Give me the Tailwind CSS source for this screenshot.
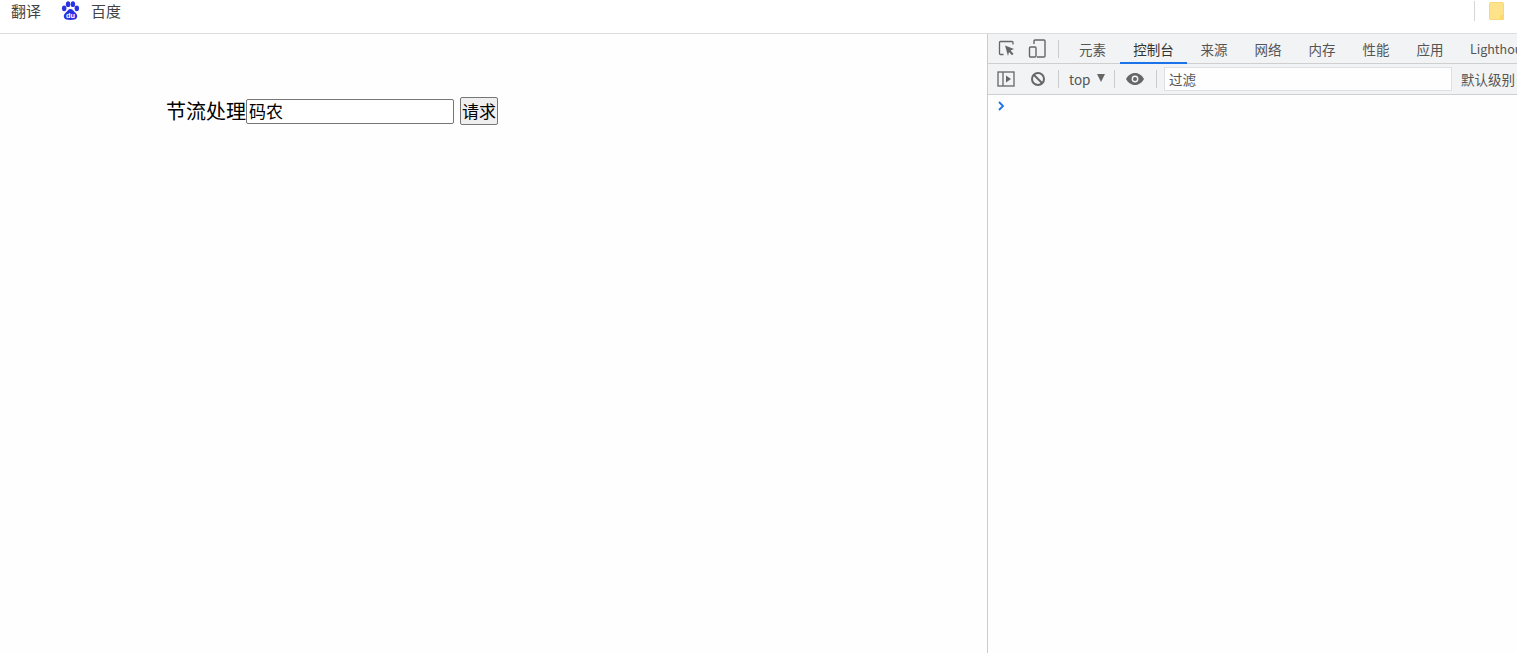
<!DOCTYPE html>
<html lang="zh">
<head>
<meta charset="utf-8">
<script src="https://cdn.jsdelivr.net/npm/@tailwindcss/browser@4"></script>
</head>
<body class="w-[1517px] h-[653px] overflow-hidden bg-white font-['Noto_Sans_CJK_SC','Liberation_Sans',sans-serif]">
<header class="h-[34px] border-b border-[#dddddd] flex items-start text-[15px] text-[#444] bg-white">
  <span class="ml-[11px] leading-[22px]">翻译</span>
  <svg class="ml-[20px] mt-[1px] w-[19px] h-[20px]" viewBox="0 0 18 19" fill="#2932e1">
    <ellipse cx="3" cy="7" rx="2.1" ry="2.7"/><ellipse cx="6.7" cy="3" rx="2.1" ry="2.8"/><ellipse cx="11.3" cy="3" rx="2.1" ry="2.8"/><ellipse cx="15" cy="7" rx="2.1" ry="2.7"/>
    <path d="M9 7.500c-2 0-3 2-4.500 3.500C3 12.500 2 14 3 16c.8 1.800 3 2 6 2s5.200-.2 6-2c1-2 0-3.500-1.500-5C12 9.500 11 7.500 9 7.500z"/>
    <text x="9" y="16.500" text-anchor="middle" font-size="7" font-weight="700" fill="#fff" font-family="Liberation Sans">du</text>
  </svg>
  <span class="ml-[11px] leading-[22px]">百度</span>
  <div class="ml-auto flex items-start">
    <div class="w-px h-[20px] mt-[1px] bg-[#d5d5d5]"></div>
    <div class="relative ml-[14px] mr-[13px] mt-[2px] w-[15px] h-[18px] rounded-[2px] bg-[#fee38a] border border-[#f8d775]">
      <div class="absolute right-[-1px] bottom-[-1px] w-[4px] h-[5px] bg-[#fbd96e] rounded-[1px]"></div>
    </div>
  </div>
</header>
<div class="flex h-[619px]">
  <main class="w-[987px] shrink-0 bg-[#fefefe] pl-[166px] pt-[63px]">
    <div class="flex items-start text-black h-[28px]">
      <span class="text-[20px] leading-[27px] w-[80px] whitespace-nowrap">节流处理</span>
      <input value="码农" class="w-[208px] h-[25px] mt-[2px] border border-[#767676] rounded-[2px] pl-[2px] pr-[2px] pb-[2px] text-[17px] leading-[20px] text-black bg-white outline-none">
      <button class="ml-[6px] w-[38px] h-[28px] border border-[#767676] rounded-[2px] bg-[#efefef] text-[17px] leading-[24px] text-black whitespace-nowrap">请求</button>
    </div>
  </main>
  <aside class="w-[530px] shrink-0 border-l border-[#cccccc] bg-[#fefefe] text-[13.500px] text-[#555] overflow-hidden">
    <div class="h-[30px] bg-[#f1f3f4] border-b border-[#cfcfcf] flex items-center">
      <svg class="shrink-0 ml-[10px] w-[18px] h-[18px]" viewBox="0 0 18 18" fill="none" stroke="#666" stroke-width="1.300">
        <path d="M5.500 14.500H2.500a1 1 0 0 1-1-1V2.500a1 1 0 0 1 1-1H14a1 1 0 0 1 1 1V4.500"/>
        <path d="M7 5.500l9 3.500-3.500 1.500 3 3.200-1.500 1.500-3-3.200L10 16z" fill="#666" stroke="none"/>
      </svg>
      <svg class="shrink-0 ml-[12px] w-[18px] h-[20px]" viewBox="0 0 18 20" fill="none" stroke="#666" stroke-width="1.400">
        <path d="M6 5V2a1 1 0 0 1 1-1h9a1 1 0 0 1 1 1v15a1 1 0 0 1-1 1H9"/>
        <rect x="1.500" y="8" width="6.500" height="10" rx="1"/>
      </svg>
      <div class="shrink-0 ml-[12px] w-px h-[18px] bg-[#ccc]"></div>
      <nav class="shrink-0 flex h-full ml-[6px] whitespace-nowrap leading-[30px]">
        <span class="w-[55px] text-center">元素</span>
        <span class="w-[67px] text-center text-[#333] border-b-2 border-[#1a73e8] h-[30px]">控制台</span>
        <span class="w-[54px] text-center">来源</span>
        <span class="w-[54px] text-center">网络</span>
        <span class="w-[54px] text-center">内存</span>
        <span class="w-[54px] text-center">性能</span>
        <span class="w-[54px] text-center">应用</span>
        <span class="ml-[13px] text-[12.500px]">Lighthouse</span>
      </nav>
    </div>
    <div class="h-[31px] bg-[#f1f3f4] border-b border-[#cfcfcf] flex items-center whitespace-nowrap">
      <svg class="shrink-0 ml-[9px] w-[18px] h-[16px]" viewBox="0 0 18 16" fill="none" stroke="#666" stroke-width="1.300">
        <rect x="1" y="1" width="16" height="14"/><path d="M6 1v14"/><path d="M9 4.500l5 3.500-5 3.500z" fill="#666" stroke="none"/>
      </svg>
      <svg class="shrink-0 ml-[15px] w-[16px] h-[16px]" viewBox="0 0 16 16" fill="none" stroke="#666" stroke-width="2">
        <circle cx="8" cy="8" r="6"/><path d="M4 4l8 8"/>
      </svg>
      <div class="shrink-0 ml-[12px] w-px h-[18px] bg-[#ccc]"></div>
      <span class="ml-[10px] w-[22px]">top</span>
      <svg class="shrink-0 ml-[5px] mb-[2px] w-[10px] h-[8px]" viewBox="0 0 10 8" fill="#666"><path d="M1 0h8L5 8z"/></svg>
      <div class="shrink-0 ml-[8px] w-px h-[18px] bg-[#ccc]"></div>
      <svg class="shrink-0 ml-[11px] w-[18px] h-[12px]" viewBox="0 0 18 12" fill="#666">
        <path d="M9 0C5 0 2 2.500 0 6c2 3.500 5 6 9 6s7-2.500 9-6c-2-3.500-5-6-9-6z"/><circle cx="9" cy="6" r="3.400" fill="#f1f3f4"/><circle cx="9" cy="6" r="2"/>
      </svg>
      <div class="shrink-0 ml-[12px] w-px h-[18px] bg-[#ccc]"></div>
      <div class="shrink-0 ml-[7px] w-[288px] h-[24px] bg-[#fefefe] border border-[#e0e0e0] pl-[4px] leading-[22px]">过滤</div>
      <span class="ml-[9px]">默认级别</span>
    </div>
    <div class="pl-[9px] pt-[6px]">
      <svg class="w-[9px] h-[10px]" viewBox="0 0 9 10" fill="none" stroke="#1a73e8" stroke-width="1.800"><path d="M2 1l4 4-4 4"/></svg>
    </div>
  </aside>
</div>
</body>
</html>
